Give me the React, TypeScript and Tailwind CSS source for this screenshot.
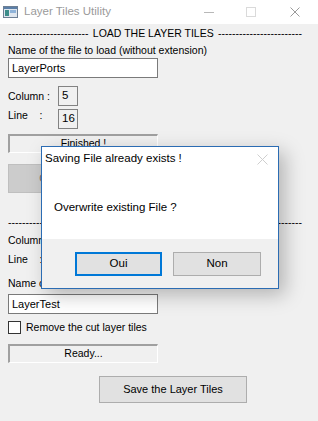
import React from 'react';

const font = { fontFamily: '"Liberation Sans", Arial, sans-serif' };

const AppIcon = () => (
  <svg width="15" height="12" viewBox="0 0 15 12">
    <rect x="0.5" y="0.5" width="14" height="11" fill="#dfe6ee" stroke="#6d7f94" />
    <rect x="1" y="1" width="13" height="2" fill="#5b7fa8" />
    <rect x="2" y="4" width="4" height="6" fill="#3c8d8a" />
    <rect x="7" y="4" width="6" height="3" fill="#8fb3d9" />
  </svg>
);

const Separator = ({ label }: { label: string }) => (
  <div className="flex h-[16px] items-center justify-between text-[10.5px] leading-[16px] text-black whitespace-nowrap">
    <span>-----------------------</span>
    <span>{label}</span>
    <span>------------------------</span>
  </div>
);

type RowProps = { label: string; value: string; labelTop?: boolean };

const ValueRow = ({ label, value, labelTop }: RowProps) => (
  <div className={`flex h-[20px] ${labelTop ? 'items-start' : 'items-center'}`}>
    <span
      className={`w-[50px] text-[10.5px] leading-[14px] whitespace-pre ${labelTop ? '-mt-[1px]' : ''}`}
    >
      {label}
    </span>
    <span className="flex h-[20px] w-[20px] items-center border border-[#828282] bg-[#f0f0f0] pl-[3px] text-[11.5px]">
      {value}
    </span>
  </div>
);

const StatusBox = ({ text }: { text: string }) => (
  <div className="flex h-[19px] w-[150px] items-center justify-center border-t-2 border-l-2 border-t-[#a0a0a0] border-l-[#a0a0a0] border-b border-r border-b-white border-r-white text-[10.5px]">
    {text}
  </div>
);

const TextBox = ({ value }: { value: string }) => (
  <div className="flex h-[20px] w-[150px] items-center border border-[#7a7a7a] bg-white px-[3px] text-[11px]">
    {value}
  </div>
);

export default function App() {
  return (
    <div className="relative h-[421px] w-[318px] overflow-hidden bg-[#f0f0f0]" style={font}>
      {/* title bar */}
      <div className="flex h-[24px] items-center bg-white">
        <div className="ml-[3px] flex w-[18px] items-center">
          <AppIcon />
        </div>
        <span className="ml-[3px] text-[11.5px] text-[#9a9a9a]">Layer Tiles Utility</span>
        <div className="ml-auto flex h-full items-center">
          <div className="flex w-[42px] justify-center">
            <div className="h-px w-[10px] bg-[#b8b8b8]" />
          </div>
          <div className="flex w-[42px] justify-center">
            <div className="h-[10px] w-[10px] border border-[#dadada]" />
          </div>
          <div className="flex w-[46px] justify-center">
            <svg width="10" height="10" viewBox="0 0 10 10">
              <path d="M0.5 0.5 L9.5 9.5 M9.5 0.5 L0.5 9.5" stroke="#9a9a9a" strokeWidth="1" />
            </svg>
          </div>
        </div>
      </div>

      {/* body */}
      <div className="flex flex-col pl-[8px] pr-[16px] pt-[1px] text-black">
        <Separator label="LOAD THE LAYER TILES" />
        <div className="mt-[2px] h-[14px] text-[10.5px] leading-[14px]">
          Name of the file to load (without extension)
        </div>
        <div className="mt-[1px]">
          <TextBox value="LayerPorts" />
        </div>
        <div className="mt-[8px] flex flex-col gap-[3px]">
          <ValueRow label="Column :" value="5" />
          <ValueRow label="Line    :" value="16" labelTop />
        </div>
        <div className="mt-[5px]">
          <StatusBox text="Finished !" />
        </div>
        <button className="mt-[11px] flex h-[29px] w-[150px] items-center justify-center border border-[#bfbfbf] bg-[#cccccc] text-[10.5px] text-[#6d6d6d]">
          Cut the Layer Tiles
        </button>
        <div className="mt-[21px]">
          <Separator label="SAVE THE LAYER TILES" />
        </div>
        <div className="flex flex-col gap-[3px]">
          <ValueRow label="Column :" value="5" />
          <ValueRow label="Line    :" value="16" labelTop />
        </div>
        <div className="mt-[3px] h-[14px] text-[10.5px] leading-[14px]">
          Name of the file to save (without extension)
        </div>
        <div className="mt-[4px]">
          <TextBox value="LayerTest" />
        </div>
        <label className="mt-[7px] flex h-[13px] items-center gap-[5px] text-[10.5px]">
          <span className="h-[13px] w-[13px] border border-[#333333] bg-white" />
          Remove the cut layer tiles
        </label>
        <div className="mt-[10px]">
          <StatusBox text="Ready..." />
        </div>
        <div className="mt-[13px] flex pl-[91px]">
          <button className="flex h-[27px] w-[148px] items-center justify-center border border-[#adadad] bg-[#e1e1e1] text-[11px]">
            Save the Layer Tiles
          </button>
        </div>
      </div>

      {/* message box */}
      <div className="absolute left-[41px] top-[146px] flex h-[143px] w-[238px] flex-col border border-[#2b6cb3] bg-white shadow-[6px_6px_18px_rgba(0,0,0,0.25)]">
        <div className="flex h-[24px] items-center justify-between pl-[3px] pr-[10px]">
          <span className="text-[11.5px]">Saving File already exists !</span>
          <svg width="11" height="11" viewBox="0 0 11 11">
            <path d="M0.5 0.5 L10.5 10.5 M10.5 0.5 L0.5 10.5" stroke="#cfcfcf" strokeWidth="1" />
          </svg>
        </div>
        <div className="flex h-[68px] items-center pl-[12px] pt-[6px] text-[11.5px]">
          Overwrite existing File ?
        </div>
        <div className="flex flex-1 items-center gap-[11px] bg-[#f0f0f0] pl-[33px]">
          <button className="flex h-[24px] w-[87px] items-center justify-center border-2 border-[#0078d7] bg-[#e1e1e1] text-[11.5px]">
            Oui
          </button>
          <button className="flex h-[24px] w-[88px] items-center justify-center border border-[#adadad] bg-[#e1e1e1] text-[11.5px]">
            Non
          </button>
        </div>
      </div>
    </div>
  );
}
